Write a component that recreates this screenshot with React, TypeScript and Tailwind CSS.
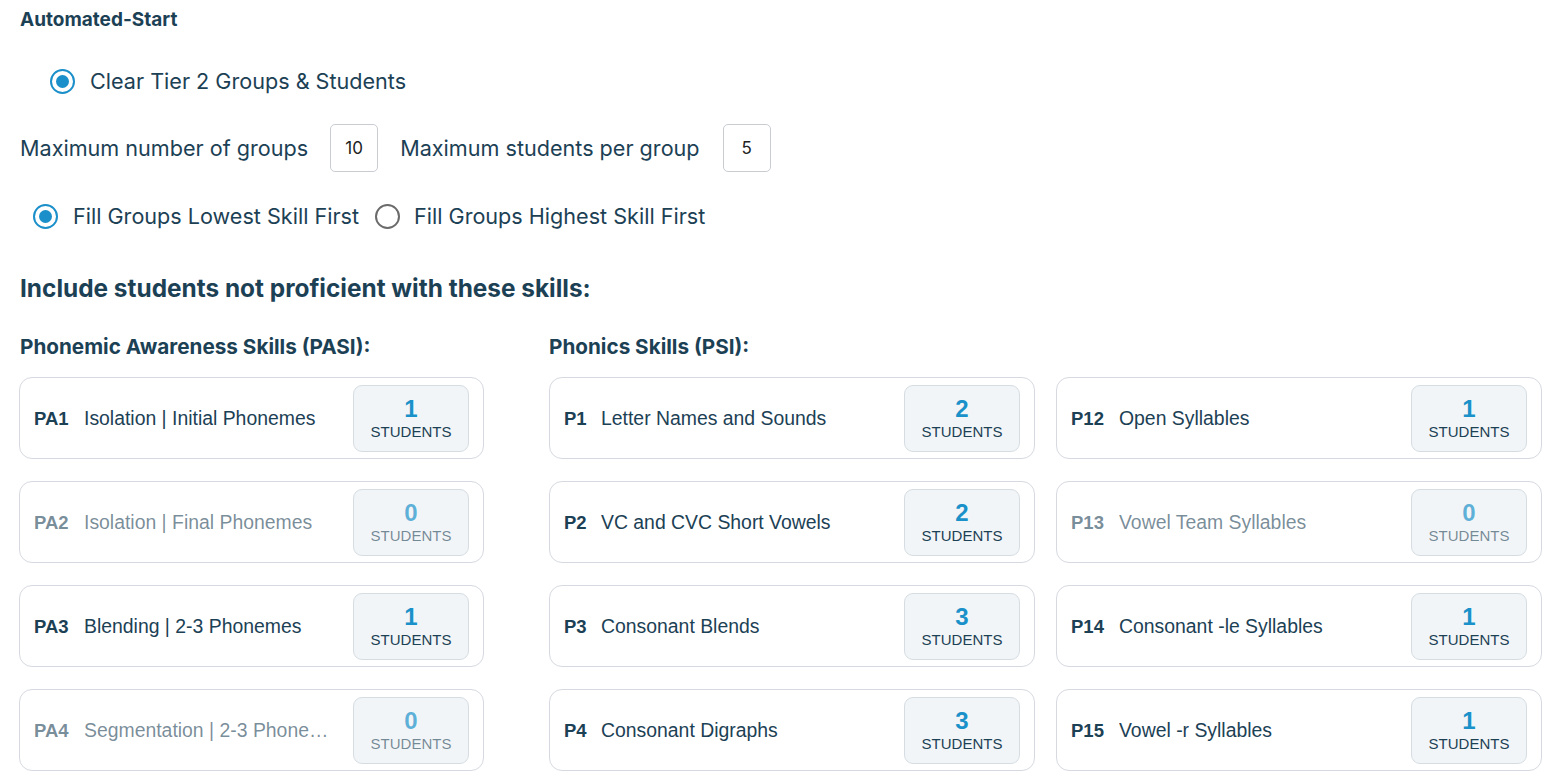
import React from "react";

const pasi = [
  { code: "PA1", label: "Isolation | Initial Phonemes", n: 1 },
  { code: "PA2", label: "Isolation | Final Phonemes", n: 0 },
  { code: "PA3", label: "Blending | 2-3 Phonemes", n: 1 },
  { code: "PA4", label: "Segmentation | 2-3 Phonemes", n: 0 },
];
const psiA = [
  { code: "P1", label: "Letter Names and Sounds", n: 2 },
  { code: "P2", label: "VC and CVC Short Vowels", n: 2 },
  { code: "P3", label: "Consonant Blends", n: 3 },
  { code: "P4", label: "Consonant Digraphs", n: 3 },
];
const psiB = [
  { code: "P12", label: "Open Syllables", n: 1 },
  { code: "P13", label: "Vowel Team Syllables", n: 0 },
  { code: "P14", label: "Consonant -le Syllables", n: 1 },
  { code: "P15", label: "Vowel -r Syllables", n: 1 },
];

function Radio({ checked }: { checked: boolean }) {
  return checked ? (
    <div className="flex h-[25px] w-[25px] shrink-0 items-center justify-center rounded-full border-[2.5px] border-[#1a8fc9] bg-white">
      <div className="h-[13px] w-[13px] rounded-full bg-[#1a8fc9]" />
    </div>
  ) : (
    <div className="h-[25px] w-[25px] shrink-0 rounded-full border-2 border-[#6b6b6b] bg-white" />
  );
}

function Card({ code, label, n, codeW }: { code: string; label: string; n: number; codeW: string }) {
  const off = n === 0;
  return (
    <div className="flex h-[82px] items-center rounded-[13px] border border-[#d6d9e0] bg-white pl-[14px] pr-[14px]">
      <div
        className={`flex min-w-0 flex-1 items-center pt-px text-[19.4px] ${off ? "text-[#1c4155]/60" : "text-[#1c4155]"}`}
        style={{ fontFamily: '"Liberation Sans", Arial, sans-serif' }}
      >
        <span className={`${codeW} shrink-0 text-[18.5px] font-bold`}>{code}</span>
        <span className="truncate pr-[22px]">{label}</span>
      </div>
      <div
        className="flex h-[67px] w-[116px] shrink-0 flex-col items-center justify-center rounded-[9px] border border-[#d6dde2] bg-[#f2f5f7] pt-[2px]"
        style={{ fontFamily: '"Liberation Sans", Arial, sans-serif' }}
      >
        <span className={`text-[24px] font-bold leading-[24px] ${off ? "text-[#1a91c9]/70" : "text-[#1a91c9]"}`}>{n}</span>
        <span className={`mt-[2px] text-[15px] leading-[18px] ${off ? "text-[#1c4155]/60" : "text-[#1c4155]"}`}>STUDENTS</span>
      </div>
    </div>
  );
}

export default function App() {
  return (
    <div className="min-h-[782px] bg-white pl-[19px] pr-[11px] text-[#1c4155]" style={{ fontFamily: 'Inter, "Noto Sans", sans-serif' }}>
      <div className="pl-px pt-[9px] text-[19px] font-bold leading-[22px]">Automated-Start</div>

      <div className="mt-[37px] flex h-[26px] items-center gap-[15px] pl-[31px]">
        <Radio checked />
        <span className="text-[21.6px] leading-[26px]">Clear Tier 2 Groups &amp; Students</span>
      </div>

      <div className="mt-[30px] flex h-[48px] items-center pl-px text-[21.6px] leading-[26px]">
        <span>Maximum number of groups</span>
        <div className="ml-[22px] flex h-[48px] w-[48px] items-center justify-center rounded-[5px] border border-[#c9cdd2] text-[17px] text-[#222]">10</div>
        <span className="ml-[22px]">Maximum students per group</span>
        <div className="ml-[23px] flex h-[48px] w-[48px] items-center justify-center rounded-[5px] border border-[#c9cdd2] text-[17px] text-[#222]">5</div>
      </div>

      <div className="mt-[31px] flex h-[26px] items-center pl-[14px] text-[21.6px] leading-[26px]">
        <Radio checked />
        <span className="ml-[15px]">Fill Groups Lowest Skill First</span>
        <div className="ml-[16px]"><Radio checked={false} /></div>
        <span className="ml-[14px]">Fill Groups Highest Skill First</span>
      </div>

      <div className="mt-[44px] pl-px text-[24.4px] font-bold leading-[30px]">Include students not proficient with these skills:</div>

      <div className="mt-[31px] flex gap-[65px]">
        <div className="w-[465px] shrink-0">
          <div className="pl-px text-[20.7px] font-bold leading-[26px]">Phonemic Awareness Skills (PASI):</div>
          <div className="mt-[17px] flex flex-col gap-[22px]">
            {pasi.map((c) => (
              <Card key={c.code} {...c} codeW="w-[50px]" />
            ))}
          </div>
        </div>
        <div className="flex-1">
          <div className="text-[20.7px] font-bold leading-[26px]">Phonics Skills (PSI):</div>
          <div className="mt-[17px] grid grid-cols-2 gap-x-[21px] gap-y-[22px]">
            {psiA.map((c, i) => (
              <React.Fragment key={c.code}>
                <Card {...c} codeW="w-[37px]" />
                <Card {...psiB[i]} codeW="w-[48px]" />
              </React.Fragment>
            ))}
          </div>
        </div>
      </div>
    </div>
  );
}
